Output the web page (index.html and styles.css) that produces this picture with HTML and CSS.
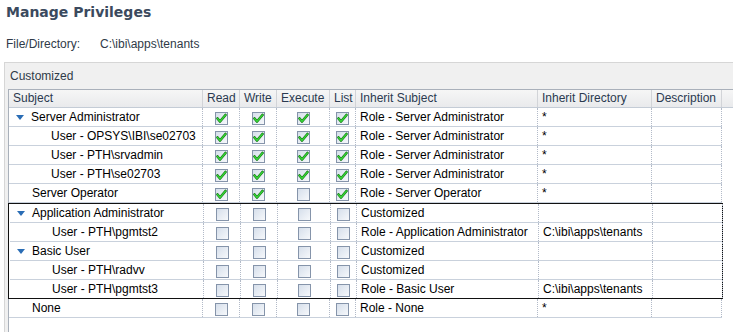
FILE: index.html
```html
<!DOCTYPE html>
<html lang="en">

<head>
    <meta charset="UTF-8">
    <title>Manage Privileges</title>
    <link rel="stylesheet" href="styles.css">
</head>

<body>
    <svg width="0" height="0" class="defs">
        <symbol id="chk" viewBox="0 0 13 13">
            <path d="M2.5 6.5 L5 9.5 L10.5 3" fill="none" stroke="#0a6e0a" stroke-width="2.6" stroke-linecap="round" stroke-linejoin="round"/>
            <path d="M2.5 6.5 L5 9.5 L10.5 3" fill="none" stroke="#37d437" stroke-width="1.4" stroke-linecap="round" stroke-linejoin="round"/>
        </symbol>
    </svg>

    <h1 class="title">Manage Privileges</h1>

    <div class="file-line">
        <span class="file-label">File/Directory:</span>
        <span class="file-path">C:\ibi\apps\tenants</span>
    </div>

    <div class="panel">
        <div class="panel-label">Customized</div>

        <div class="grid">
            <div class="head">
                <div class="hcell">Subject</div>
                <div class="hcell">Read</div>
                <div class="hcell">Write</div>
                <div class="hcell">Execute</div>
                <div class="hcell">List</div>
                <div class="hcell">Inherit Subject</div>
                <div class="hcell">Inherit Directory</div>
                <div class="hcell">Description</div>
                <div class="hcell filler"></div>
            </div>

            <div class="row">
                <div class="cell subj lvl1"><span class="twisty"></span>Server Administrator</div>
                <div class="cell mid"><span class="cb"><svg><use href="#chk"/></svg></span></div>
                <div class="cell mid"><span class="cb"><svg><use href="#chk"/></svg></span></div>
                <div class="cell mid"><span class="cb"><svg><use href="#chk"/></svg></span></div>
                <div class="cell mid"><span class="cb"><svg><use href="#chk"/></svg></span></div>
                <div class="cell">Role - Server Administrator</div>
                <div class="cell">*</div>
                <div class="cell"></div>
            </div>
            <div class="row">
                <div class="cell subj lvl2">User - OPSYS\IBI\se02703</div>
                <div class="cell mid"><span class="cb"><svg><use href="#chk"/></svg></span></div>
                <div class="cell mid"><span class="cb"><svg><use href="#chk"/></svg></span></div>
                <div class="cell mid"><span class="cb"><svg><use href="#chk"/></svg></span></div>
                <div class="cell mid"><span class="cb"><svg><use href="#chk"/></svg></span></div>
                <div class="cell">Role - Server Administrator</div>
                <div class="cell">*</div>
                <div class="cell"></div>
            </div>
            <div class="row">
                <div class="cell subj lvl2">User - PTH\srvadmin</div>
                <div class="cell mid"><span class="cb"><svg><use href="#chk"/></svg></span></div>
                <div class="cell mid"><span class="cb"><svg><use href="#chk"/></svg></span></div>
                <div class="cell mid"><span class="cb"><svg><use href="#chk"/></svg></span></div>
                <div class="cell mid"><span class="cb"><svg><use href="#chk"/></svg></span></div>
                <div class="cell">Role - Server Administrator</div>
                <div class="cell">*</div>
                <div class="cell"></div>
            </div>
            <div class="row">
                <div class="cell subj lvl2">User - PTH\se02703</div>
                <div class="cell mid"><span class="cb"><svg><use href="#chk"/></svg></span></div>
                <div class="cell mid"><span class="cb"><svg><use href="#chk"/></svg></span></div>
                <div class="cell mid"><span class="cb"><svg><use href="#chk"/></svg></span></div>
                <div class="cell mid"><span class="cb"><svg><use href="#chk"/></svg></span></div>
                <div class="cell">Role - Server Administrator</div>
                <div class="cell">*</div>
                <div class="cell"></div>
            </div>
            <div class="row">
                <div class="cell subj lvl1">Server Operator</div>
                <div class="cell mid"><span class="cb"><svg><use href="#chk"/></svg></span></div>
                <div class="cell mid"><span class="cb"><svg><use href="#chk"/></svg></span></div>
                <div class="cell mid"><span class="cb"></span></div>
                <div class="cell mid"><span class="cb"><svg><use href="#chk"/></svg></span></div>
                <div class="cell">Role - Server Operator</div>
                <div class="cell">*</div>
                <div class="cell"></div>
            </div>

            <div class="group">
                <div class="row">
                    <div class="cell subj lvl1"><span class="twisty"></span>Application Administrator</div>
                    <div class="cell mid"><span class="cb"></span></div>
                    <div class="cell mid"><span class="cb"></span></div>
                    <div class="cell mid"><span class="cb"></span></div>
                    <div class="cell mid"><span class="cb"></span></div>
                    <div class="cell">Customized</div>
                    <div class="cell"></div>
                    <div class="cell"></div>
                </div>
                <div class="row">
                    <div class="cell subj lvl2">User - PTH\pgmtst2</div>
                    <div class="cell mid"><span class="cb"></span></div>
                    <div class="cell mid"><span class="cb"></span></div>
                    <div class="cell mid"><span class="cb"></span></div>
                    <div class="cell mid"><span class="cb"></span></div>
                    <div class="cell">Role - Application Administrator</div>
                    <div class="cell">C:\ibi\apps\tenants</div>
                    <div class="cell"></div>
                </div>
                <div class="row">
                    <div class="cell subj lvl1"><span class="twisty"></span>Basic User</div>
                    <div class="cell mid"><span class="cb"></span></div>
                    <div class="cell mid"><span class="cb"></span></div>
                    <div class="cell mid"><span class="cb"></span></div>
                    <div class="cell mid"><span class="cb"></span></div>
                    <div class="cell">Customized</div>
                    <div class="cell"></div>
                    <div class="cell"></div>
                </div>
                <div class="row">
                    <div class="cell subj lvl2">User - PTH\radvv</div>
                    <div class="cell mid"><span class="cb"></span></div>
                    <div class="cell mid"><span class="cb"></span></div>
                    <div class="cell mid"><span class="cb"></span></div>
                    <div class="cell mid"><span class="cb"></span></div>
                    <div class="cell">Customized</div>
                    <div class="cell"></div>
                    <div class="cell"></div>
                </div>
                <div class="row">
                    <div class="cell subj lvl2">User - PTH\pgmtst3</div>
                    <div class="cell mid"><span class="cb"></span></div>
                    <div class="cell mid"><span class="cb"></span></div>
                    <div class="cell mid"><span class="cb"></span></div>
                    <div class="cell mid"><span class="cb"></span></div>
                    <div class="cell">Role - Basic User</div>
                    <div class="cell">C:\ibi\apps\tenants</div>
                    <div class="cell"></div>
                </div>
            </div>

            <div class="row">
                <div class="cell subj lvl1">None</div>
                <div class="cell mid"><span class="cb"></span></div>
                <div class="cell mid"><span class="cb"></span></div>
                <div class="cell mid"><span class="cb"></span></div>
                <div class="cell mid"><span class="cb"></span></div>
                <div class="cell">Role - None</div>
                <div class="cell">*</div>
                <div class="cell"></div>
            </div>
        </div>
    </div>
</body>

</html>
```

FILE: styles.css
```css
body {
    margin: 0;
    padding-left: 6px;
    background-color: #fff;
    font-family: 'Liberation Sans', Arial, sans-serif;
    font-size: 12px;
    color: #000;
    overflow: hidden;
}

.defs {
    position: absolute;
}

.title {
    margin: 3px 0 0;
    font-family: 'DejaVu Sans', sans-serif;
    font-size: 14px;
    line-height: 18px;
    font-weight: bold;
    color: #3b4a5e;
}

.file-line {
    display: flex;
    margin-top: 15px;
    line-height: 16px;
    color: #2f3a48;
}

.file-label {
    width: 94px;
}

.panel {
    margin: 10px 0 0 -2px;
    height: 269px;
    padding-left: 3px;
    background-color: #f0f0f0;
    border: 1px solid #d6d6d6;
    border-right: none;
    border-bottom: none;
}

.panel-label {
    padding: 5px 2px;
    line-height: 16px;
    color: #2f3a48;
}

.grid {
    height: 243px;
    background-color: #fff;
    border-top: 1px solid #a9b0ba;
    border-left: 1px solid #a9b0ba;
}

.head {
    display: grid;
    grid-template-columns: 194px 37px 37px 53px 26px 182px 114px 70px 1fr;
    height: 17px;
    background: linear-gradient(#f6f6f6, #e9eaec);
    border-bottom: 1px solid #c4ccd6;
}

.hcell {
    padding-left: 4px;
    line-height: 17px;
    color: #2b3a50;
    border-right: 1px solid #d2d4d8;
    white-space: nowrap;
}

.filler {
    border-right: none;
}

.row {
    display: grid;
    grid-template-columns: 194px 37px 37px 53px 26px 182px 114px 70px;
    width: 713px;
    height: 18px;
    border-bottom: 1px solid #c9d1dc;
}

.group {
    width: 713px;
    margin-left: -1px;
    border: 1px solid #111;
}

.group .row {
    margin-left: 1px;
    width: 712px;
}

.group .row:last-child {
    border-bottom: none;
}

.cell {
    display: flex;
    align-items: center;
    padding-left: 4px;
    line-height: 18px;
    border-right: 1px dotted #b2bac8;
    white-space: nowrap;
    overflow: hidden;
}

.mid {
    justify-content: center;
    padding-left: 0;
}

.lvl1 {
    padding-left: 23px;
}

.lvl2 {
    padding-left: 42px;
}

.twisty {
    width: 0;
    height: 0;
    margin-left: -16px;
    margin-right: 7px;
    border-left: 4.5px solid transparent;
    border-right: 4.5px solid transparent;
    border-top: 5px solid #2a6db5;
}

.cb {
    display: block;
    width: 11px;
    height: 11px;
    margin-top: 3px;
    border: 1px solid #8594aa;
    background: linear-gradient(135deg, #d6dfeb, #f6f8fb);
    position: relative;
}

.cb svg {
    position: absolute;
    left: -1px;
    top: -1px;
    width: 13px;
    height: 13px;
}
```
